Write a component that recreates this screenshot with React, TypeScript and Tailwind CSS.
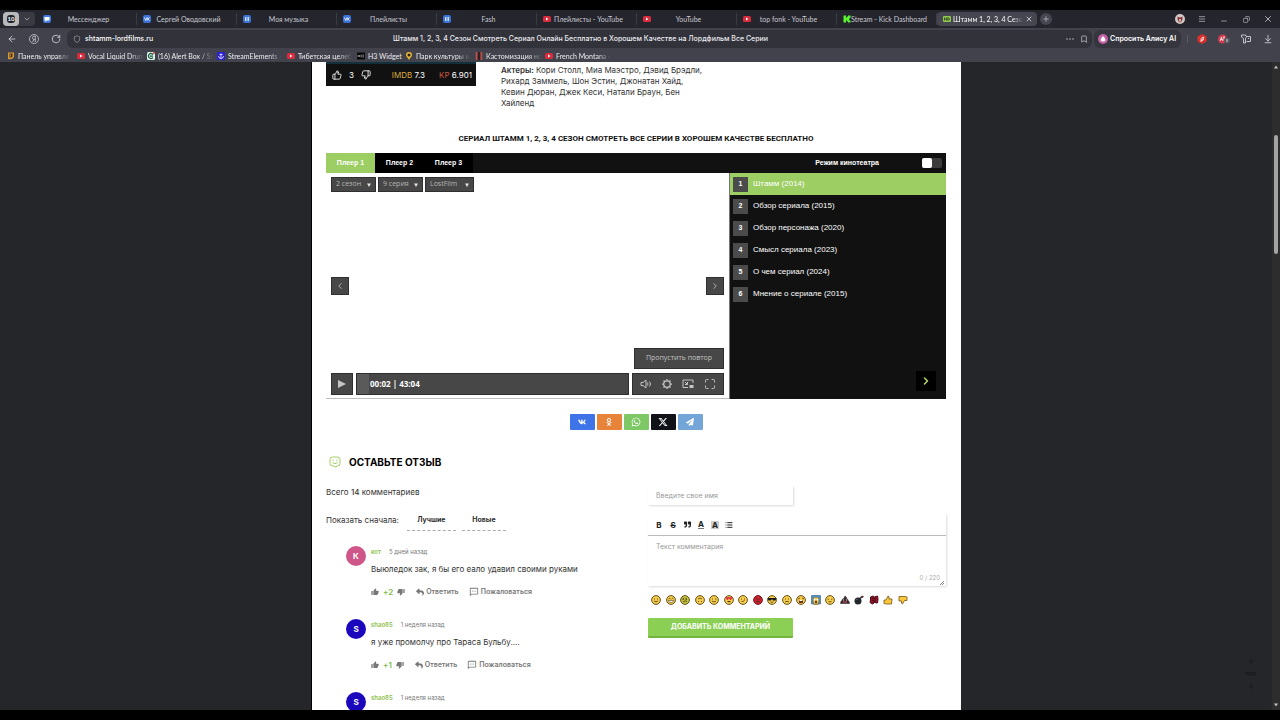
import { useState } from 'react'
import type { ReactNode } from 'react'
import clsx from 'clsx'
import {
  ArrowDown,
  ArrowDownToLine,
  ArrowLeft,
  ArrowUp,
  Bookmark,
  ChevronDown,
  ChevronLeft,
  ChevronRight,
  Copy,
  List,
  Maximize,
  Menu,
  Minus,
  Plus,
  RotateCw,
  Shield,
  ThumbsDown,
  ThumbsUp,
  X,
} from 'lucide-react'
import { FaOdnoklassniki, FaPaperPlane, FaQuoteRight, FaReply, FaVk, FaWhatsapp } from 'react-icons/fa'
import { FaXTwitter } from 'react-icons/fa6'
import { MdOutlineSms, MdThumbDown, MdThumbUp } from 'react-icons/md'

type IconKind = 'chat' | 'vk' | 'pause' | 'youtube' | 'kick' | 'hd' | 'panel' | 'alert' | 'anchor' | 'h3' | 'pin' | 'bars'

const TABS: { icon: IconKind; title: string }[] = [
  { icon: 'chat', title: 'Мессенджер' },
  { icon: 'vk', title: 'Сергей Оводовский' },
  { icon: 'pause', title: 'Моя музыка' },
  { icon: 'vk', title: 'Плейлисты' },
  { icon: 'pause', title: 'Fash' },
  { icon: 'youtube', title: 'Плейлисты - YouTube' },
  { icon: 'youtube', title: 'YouTube' },
  { icon: 'youtube', title: 'top fonk - YouTube' },
  { icon: 'kick', title: 'Stream - Kick Dashboard' },
]

const BOOKMARKS: { icon: IconKind; title: string; short?: boolean }[] = [
  { icon: 'panel', title: 'Панель управле' },
  { icon: 'youtube', title: 'Vocal Liquid Drum' },
  { icon: 'alert', title: '(16) Alert Box / St' },
  { icon: 'anchor', title: 'StreamElements -' },
  { icon: 'youtube', title: 'Тибетская целеб' },
  { icon: 'h3', title: 'H3 Widget', short: true },
  { icon: 'pin', title: 'Парк культуры и' },
  { icon: 'bars', title: 'Кастомизация но' },
  { icon: 'youtube', title: 'French Montana -' },
]

const PLAYLIST = [
  'Штамм (2014)',
  'Обзор сериала (2015)',
  'Обзор персонажа (2020)',
  'Смысл сериала (2023)',
  'О чем сериал (2024)',
  'Мнение о сериале (2015)',
]

const SHARE = [
  { label: 'VK', color: 'bg-[#3f74e8]', icon: <FaVk className="size-2" /> },
  { label: 'Одноклассники', color: 'bg-[#e8833a]', icon: <FaOdnoklassniki className="size-2" /> },
  { label: 'WhatsApp', color: 'bg-[#7dc764]', icon: <FaWhatsapp className="size-2.5" /> },
  { label: 'X', color: 'bg-[#101218]', icon: <FaXTwitter className="size-2.5" /> },
  { label: 'Telegram', color: 'bg-[#74a5d8]', icon: <FaPaperPlane className="size-2" /> },
]

const COMMENTS = [
  { name: 'кот', letter: 'К', color: 'bg-[#cf5688]', date: '5 дней назад', text: 'Выюледок зак, я бы его еало удавил своими руками', votes: '+2' },
  { name: 'shao85', letter: 'S', color: 'bg-[#1b08bd]', date: '1 неделя назад', text: 'я уже промолчу про Тараса Бульбу....', votes: '+1' },
  { name: 'shao85', letter: 'S', color: 'bg-[#1b08bd]', date: '1 неделя назад', text: '', votes: '' },
]

const EMOJIS = [
  'smile', 'grin', 'sick', 'upside', 'wink', 'love', 'smirk', 'angry', 'cool',
  'sad', 'weary', 'scream', 'relieved', 'poop', 'bomb', 'hundred', 'like', 'dislike',
]

function SiteIcon({ kind }: { kind: IconKind }) {
  return (
    <svg viewBox="0 0 16 16" className="size-2 shrink-0">
      {kind === 'chat' && (
        <>
          <rect width="16" height="16" rx="4" fill="#3f78dd" />
          <path d="M3 4h10v7H8l-3 3v-3H3z" fill="#fff" />
        </>
      )}
      {kind === 'vk' && (
        <>
          <rect width="16" height="16" rx="4" fill="#3a72d8" />
          <path d="M3 5l2.5 6L8 5M9.500 5v6M13 5L10 8l3 3" stroke="#fff" strokeWidth="1.600" fill="none" />
        </>
      )}
      {kind === 'pause' && (
        <>
          <rect width="16" height="16" rx="4" fill="#3a72d8" />
          <path d="M5 4v8M8 4v8M11 4v8" stroke="#fff" strokeWidth="1.500" />
        </>
      )}
      {kind === 'youtube' && (
        <>
          <rect y="2" width="16" height="12" rx="3" fill="#d92b3c" />
          <path d="M6 5l5 3-5 3z" fill="#fff" />
        </>
      )}
      {kind === 'kick' && (
        <path d="M1 1h5v4h2V3h2V1h5v5h-2v2h-1v1h1v2h2v4h-5v-2H8v-2H6v4H1z" fill="#5cf52c" />
      )}
      {kind === 'hd' && (
        <>
          <rect y="2" width="16" height="12" rx="2" fill="#8fc950" />
          <path d="M3 5v6M7 5v6M3 8h4M9.500 5.500v5h1.500q2-.5 2-2.500t-2-2.500z" stroke="#22351a" strokeWidth="1.500" fill="none" />
        </>
      )}
      {kind === 'panel' && (
        <>
          <path d="M2 1h12v9l-4 4H7l-2 2v-2H2z" fill="#d79a35" />
          <path d="M5 3h6v6l-2 2H5z" fill="#43311a" />
          <path d="M7 5v4" stroke="#d79a35" strokeWidth="1.500" />
        </>
      )}
      {kind === 'alert' && (
        <>
          <rect width="16" height="16" rx="3" fill="#d9f5e8" />
          <path d="M12 5a5 5 0 1 0 0 6M6 8h6" stroke="#18523d" strokeWidth="2.500" fill="none" />
          <circle cx="14" cy="2" r="2" fill="#e23b3b" />
        </>
      )}
      {kind === 'anchor' && (
        <>
          <rect width="16" height="16" rx="2" fill="#2a1fd6" />
          <path d="M8 3v10M3 8q0 5 5 5t5-5M5 5h6" stroke="#fff" strokeWidth="1.500" fill="none" />
        </>
      )}
      {kind === 'h3' && (
        <>
          <rect y="1" width="16" height="14" fill="#08080a" />
          <path d="M2 6v4M5 6v4M2 8h3M7 6h2l-1 2 1 2H7M11 6h3M11 8h3M11 10h3" stroke="#ddd" strokeWidth="1" fill="none" />
        </>
      )}
      {kind === 'pin' && (
        <>
          <path d="M8 0a6 6 0 0 0-6 6c0 4 4 5 6 10 2-5 6-6 6-10a6 6 0 0 0-6-6z" fill="#ecb92d" />
          <circle cx="8" cy="6" r="3" fill="#25242a" />
        </>
      )}
      {kind === 'bars' && (
        <>
          <path d="M3 0v16M13 0v16" stroke="#cf4b42" strokeWidth="3" />
          <path d="M8 0v16" stroke="#2a2225" strokeWidth="4" />
        </>
      )}
    </svg>
  )
}

function FaceDetails({ kind }: { kind: string }) {
  const line = { stroke: '#3d2c10', strokeWidth: 1.5, fill: 'none' }
  switch (kind) {
    case 'grin':
      return (
        <>
          <path d="M5 8l2-1.500L9 8M11 8l2-1.500L15 8" {...line} />
          <path d="M4.500 11h11q-1 4-5.500 4t-5.500-4z" fill="#fff" stroke="#3d2c10" />
        </>
      )
    case 'sick':
      return <path d="M5 6l3 2-3 1M14 6l-3 2 3 1M6 14q5-4 8-1" {...line} />
    case 'upside':
      return <path d="M6 8q4-4 8 0M7 12v2M13 12v2" {...line} />
    case 'wink':
      return <path d="M7 7v2M12 8h3M6 12q4 4 8 0" {...line} />
    case 'love':
      return (
        <>
          <path d="M3 5l4 5 3-5-3 0zM10 5l3 5 4-5-3 0z" fill="#de2f43" stroke="#de2f43" strokeWidth="1.500" />
          <path d="M6 12q4 5 8 0z" fill="#4a2412" />
        </>
      )
    case 'smirk':
      return <path d="M6 8h2M12 8h2M7 13q4 0 6-2" {...line} />
    case 'angry':
      return <path d="M5 6l4 3M15 6l-4 3M6 14q4-3 8 0" {...line} />
    case 'cool':
      return (
        <>
          <path d="M1 6h18l-2 5h-5l-2-3-2 3H3z" fill="#16161c" />
          <path d="M7 14q3 2 6-1" {...line} />
        </>
      )
    case 'sad':
      return <path d="M7 7v2M13 7v2M6 14q4-3 8 0" {...line} />
    case 'weary':
      return (
        <>
          <path d="M4 8l4-2M16 8l-4-2" {...line} />
          <path d="M6 10h8v6H6z" fill="#6b3315" />
          <path d="M7 11h6" stroke="#fff" strokeWidth="2" />
        </>
      )
    case 'relieved':
      return <path d="M5 8q1.500 1.500 3 0M12 8q1.500 1.500 3 0M7 13q3 2 6 0" {...line} />
    default:
      return <path d="M7 7v2M13 7v2M6 12q4 3 8 0" {...line} />
  }
}

function Emoji({ kind }: { kind: string }) {
  return (
    <svg viewBox="0 0 20 20" className="size-2.5">
      {kind === 'poop' && (
        <>
          <path d="M10 2q4 2 3 5 3 1 3 4 3 1 3 6H1q0-5 3-6 0-3 3-4 2-2 3-5z" fill="#3c2b30" stroke="#1d1418" />
          <path d="M6 10h2M12 10h2" stroke="#eee" strokeWidth="2" />
          <path d="M6 14h8" stroke="#d94c56" strokeWidth="2" />
        </>
      )}
      {kind === 'bomb' && (
        <>
          <circle cx="8" cy="12" r="7" fill="#24262d" />
          <path d="M12 7l4-4 2 2" stroke="#24262d" strokeWidth="3" fill="none" />
          <path d="M5 10l2-2" stroke="#7b7f8c" strokeWidth="2" />
          <circle cx="18" cy="3" r="1.500" fill="#a33a30" />
        </>
      )}
      {kind === 'hundred' && (
        <>
          <path d="M3 4l5-2 3 2 6-2 1 6-1 8-6-1-4 3-5-3 1-5z" fill="#8d1426" stroke="#4b0b17" strokeWidth="2" />
          <path d="M6 7l8-1M6 11l8-1M8 15l5-1" stroke="#3b0812" strokeWidth="1.500" />
        </>
      )}
      {kind === 'like' && (
        <path d="M2 10h4l4-8q3 0 2 6h6l-1 10H7l-5-1z" fill="#fbc83b" stroke="#6d4b0b" strokeWidth="1.500" />
      )}
      {kind === 'dislike' && (
        <path d="M2 3h13l3 1v7h-5l-4 7q-3 0-2-6H2z" fill="#fbc83b" stroke="#6d4b0b" strokeWidth="1.500" />
      )}
      {kind === 'scream' && (
        <>
          <path d="M1 1h18v17H1z" fill="#4f8fd0" stroke="#24466b" />
          <path d="M10 4q7 0 6 8l-2 7H6l-2-7q-1-8 6-8z" fill="#f6c944" stroke="#5d4411" />
          <circle cx="7" cy="9" r="1.800" fill="#fff" />
          <circle cx="13" cy="9" r="1.800" fill="#fff" />
          <ellipse cx="10" cy="14" rx="2" ry="3" fill="#4a2c12" />
        </>
      )}
      {!['poop', 'bomb', 'hundred', 'like', 'dislike', 'scream'].includes(kind) && (
        <>
          <circle
            cx="10"
            cy="10"
            r="8.800"
            fill={kind === 'angry' ? '#c9232f' : kind === 'sick' ? '#c1c23f' : '#f7cd4c'}
            stroke={kind === 'angry' ? '#7d141c' : '#66501c'}
            strokeWidth="2"
          />
          <FaceDetails kind={kind} />
        </>
      )}
    </svg>
  )
}

function IconButton({ label, children, className }: { label: string; children: ReactNode; className?: string }) {
  return (
    <button type="button" aria-label={label} className={clsx('flex w-[22px] shrink-0 items-center justify-center', className)}>
      {children}
    </button>
  )
}

function TabStrip() {
  return (
    <div className="flex h-[18px] items-center bg-[#25252e] pr-px font-['Lato',sans-serif] text-[7px] text-[#c9c9d0]">
      <div className="ml-[3px] flex h-3.5 w-8 items-center rounded bg-[#3a3a43]">
        <button type="button" className="flex h-full w-4 items-center justify-center rounded bg-[#b9b9ba]">
          <span className="rounded-[3px] bg-[#22222a] px-px text-[6px] leading-2 font-bold text-white">10</span>
        </button>
        <button type="button" aria-label="Группы вкладок" className="flex flex-1 justify-center">
          <ChevronDown className="size-2" />
        </button>
      </div>
      <div className="ml-0.5 flex min-w-0 items-center">
        {TABS.map((tab, i) => (
          <a key={i} href="#" className="flex h-3 w-[100px] min-w-0 items-center border-r border-[#3b3b45] pr-2.5 pl-1.5">
            <SiteIcon kind={tab.icon} />
            <span className="min-w-0 flex-1 text-center whitespace-nowrap">{tab.title}</span>
          </a>
        ))}
        <div className="flex h-3.5 w-[100px] items-center gap-0.5 rounded bg-[#464650] pr-1 pl-1.5 text-white">
          <SiteIcon kind="hd" />
          <span className="min-w-0 flex-1 whitespace-nowrap [mask-image:linear-gradient(to_right,black_85%,transparent)]">
            Штамм 1, 2, 3, 4 Сезон
          </span>
          <button type="button" aria-label="Закрыть вкладку">
            <X className="size-2" />
          </button>
        </div>
        <button type="button" aria-label="Новая вкладка" className="ml-[3px] flex size-3 items-center justify-center rounded-full bg-[#464650]">
          <Plus className="size-2" />
        </button>
      </div>
      <div className="ml-auto flex items-center">
        <IconButton label="Профиль">
          <span className="flex size-2.5 items-center justify-center rounded-full bg-[#d5c8c4]">
            <svg viewBox="0 0 10 10" className="size-2">
              <path d="M2 2l2 1h2l2-1v4L6 9H4L2 6z" fill="#7d3030" />
              <path d="M4 5h2v3H4z" fill="#e8dcd8" />
            </svg>
          </span>
        </IconButton>
        <IconButton label="Меню"><Menu className="size-2" /></IconButton>
        <IconButton label="Свернуть"><Minus className="mt-1 size-2" /></IconButton>
        <IconButton label="Развернуть"><Copy className="size-[7px] -scale-x-100" /></IconButton>
        <IconButton label="Закрыть"><X className="size-2.5" /></IconButton>
      </div>
    </div>
  )
}

function AddressBar() {
  return (
    <div className="flex h-[22px] items-center bg-[#42424c] pr-px pl-px font-['Inter',sans-serif] text-[7px] text-[#d2d2d8]">
      <IconButton label="Назад"><ArrowLeft className="size-2.5" /></IconButton>
      <IconButton label="Яндекс">
        <svg viewBox="0 0 20 20" className="size-2.5" fill="none" stroke="currentColor" strokeWidth="1.500">
          <circle cx="10" cy="10" r="9" />
          <path d="M12.500 16V4h-2Q7 4 7 7.500t3.500 3.500h2M10 11l-3 5" />
        </svg>
      </IconButton>
      <IconButton label="Обновить"><RotateCw className="size-2.5" /></IconButton>
      <div className="grid h-[18px] min-w-0 flex-1 grid-cols-[1fr_auto_1fr] items-center rounded-md bg-[#32323b] pr-1 pl-1.5 font-medium">
        <div className="flex items-center gap-1 text-white">
          <Shield className="size-2 text-[#a9a9b2]" />
          shtamm-lordfilms.ru
        </div>
        <div className="truncate text-[#ececf0]">
          Штамм 1, 2, 3, 4 Сезон Смотреть Сериал Онлайн Бесплатно в Хорошем Качестве на Лордфильм Все Серии
        </div>
        <div className="flex items-center justify-end gap-1.5">
          <button type="button" aria-label="Ещё">
            <svg viewBox="0 0 8 8" className="size-2" fill="currentColor">
              <circle cx="1" cy="4" r=".7" />
              <circle cx="4" cy="4" r=".7" />
              <circle cx="7" cy="4" r=".7" />
            </svg>
          </button>
          <button type="button" aria-label="В закладки"><Bookmark className="size-2" /></button>
        </div>
      </div>
      <button type="button" className="ml-0.5 flex h-[18px] w-[87px] items-center gap-0.5 rounded-md bg-[#35353e] pl-1 font-semibold text-white">
        <svg viewBox="0 0 20 20" className="size-2.5">
          <circle cx="10" cy="10" r="10" fill="#c65fa6" />
          <path d="M10 4q5 5 5 8t-5 3-5-3 5-8z" fill="#fff" />
        </svg>
        Спросить Алису AI
      </button>
      <span className="mr-[3px] ml-1.5 h-2 w-px bg-[#5b5b65]" />
      <IconButton label="Защита">
        <svg viewBox="0 0 20 20" className="size-2.5">
          <path d="M10 0l9 5v10l-9 5-9-5V5z" fill="#d9302c" />
          <path d="M8 14q-2-6 5-8 1 8-4 8M7 16l5-7" stroke="#fff" strokeWidth="1.500" fill="none" />
        </svg>
      </IconButton>
      <IconButton label="Переводчик">
        <svg viewBox="0 0 24 20" className="h-2.5 w-3">
          <circle cx="9" cy="10" r="9" fill="#d13b4d" />
          <path d="M4 14l3-8 2 8M5 11h4M10 6h4M12 6v7" stroke="#fff" strokeWidth="1.500" fill="none" />
          <circle cx="18" cy="13" r="6" fill="#55555f" />
          <path d="M18 10v6" stroke="#fff" strokeWidth="1.500" />
        </svg>
      </IconButton>
      <IconButton label="Расширения">
        <svg viewBox="0 0 24 20" className="h-2.5 w-3" fill="none" stroke="currentColor" strokeWidth="1.800">
          <path d="M3 2h8l2 3h8v10h-8M3 2v4l4 3v9h4v-9l2-4M16 9h2" />
        </svg>
      </IconButton>
      <IconButton label="Загрузки"><ArrowDownToLine className="size-2.5" /></IconButton>
    </div>
  )
}

function BookmarksBar() {
  return (
    <nav className="flex h-3 items-center gap-0.5 bg-[#42424c] pl-[7px] font-['Lato',sans-serif] text-[7px] text-[#ececf0]">
      {BOOKMARKS.map((b, i) => (
        <a key={i} href="#" className={clsx('flex items-center gap-[3px]', b.short ? 'w-[46px]' : 'w-[68px]')}>
          <SiteIcon kind={b.icon} />
          <span
            className={clsx(
              'min-w-0 whitespace-nowrap',
              !b.short && '[mask-image:linear-gradient(to_right,black_75%,transparent)]',
            )}
          >
            {b.title}
          </span>
        </a>
      ))}
    </nav>
  )
}

function PlayerSelect({ label, options, className }: { label: string; options: string[]; className: string }) {
  return (
    <span className={clsx('relative flex items-center', className)}>
      <select
        aria-label={label}
        className="h-[15px] w-full appearance-none border border-[#2f2f2f] bg-[#474747] pl-1 text-[7px] text-[#b5b5b5]"
      >
        {options.map((o) => (
          <option key={o}>{o}</option>
        ))}
      </select>
      <svg viewBox="0 0 8 8" className="pointer-events-none absolute right-[5px] size-1 text-[#e4e4e4]">
        <path d="M0 1h8L4 8z" fill="currentColor" />
      </svg>
    </span>
  )
}

function Player() {
  const [tab, setTab] = useState(0)
  const [active, setActive] = useState(0)
  const box = 'flex items-center justify-center border border-[#2f2f2f] bg-[#474747] text-[#c4c4c4]'

  return (
    <section className="mt-2 font-['Liberation_Sans',sans-serif] text-[7px] text-white">
      <div className="flex h-5 items-center bg-[#111]">
        {['Плеер 1', 'Плеер 2', 'Плеер 3'].map((name, i) => (
          <button
            key={name}
            type="button"
            onClick={() => setTab(i)}
            className={clsx('h-full w-[49px] font-bold', i === tab ? 'bg-[#9dce64]' : 'bg-black')}
          >
            {name}
          </button>
        ))}
        <label className="mr-1 ml-auto flex items-center gap-[43px] font-bold">
          Режим кинотеатра
          <input type="checkbox" className="peer sr-only" />
          <span className="flex h-2.5 w-5 rounded-xs bg-[#3b3b3b] peer-checked:justify-end">
            <span className="size-2.5 rounded-xs bg-white" />
          </span>
        </label>
      </div>

      <div className="flex h-[226px]">
        <div className="flex min-w-0 flex-1 flex-col border-b border-[#bdbdbd] bg-white px-[5px] pt-1 pb-[3px] font-['Open_Sans',sans-serif]">
          <div className="flex gap-0.5">
            <PlayerSelect label="Сезон" options={['2 сезон', '1 сезон', '3 сезон']} className="w-[45px]" />
            <PlayerSelect label="Серия" options={['9 серия', '10 серия']} className="w-[45px]" />
            <PlayerSelect label="Озвучка" options={['LostFilm']} className="w-[49px]" />
          </div>
          <div className="flex flex-1 items-center justify-between pt-8">
            <button type="button" aria-label="Предыдущая серия" className={clsx(box, 'size-[18px]')}>
              <ChevronLeft className="size-2.5" />
            </button>
            <button type="button" aria-label="Следующая серия" className={clsx(box, 'size-[18px]')}>
              <ChevronRight className="size-2.5" />
            </button>
          </div>
          <button type="button" className={clsx(box, 'h-[21px] w-[90px] self-end text-[#a9a9a9]')}>
            Пропустить повтор
          </button>
          <div className="mt-1 flex h-[22px] gap-[3px]">
            <button type="button" aria-label="Воспроизвести" className={clsx(box, 'w-[22px]')}>
              <svg viewBox="0 0 8 8" className="size-2"><path d="M0 0l8 4-8 4z" fill="currentColor" /></svg>
            </button>
            <div className="flex min-w-0 flex-1 items-center border border-[#2f2f2f] bg-[#474747] text-[8px] font-bold">
              <span className="mr-px h-full w-3 bg-[#5a5a5a]" />
              00:02 | 43:04
            </div>
            <div className={clsx(box, 'w-[92px] gap-2.5')}>
              <button type="button" aria-label="Звук">
                <svg viewBox="0 0 24 20" className="h-2.5 w-3" fill="none" stroke="currentColor" strokeWidth="2">
                  <path d="M2 7h4l6-5v16l-6-5H2zM15 7q2 3 0 6M19 5q4 5 0 10" />
                </svg>
              </button>
              <button type="button" aria-label="Настройки">
                <svg viewBox="0 0 20 20" className="size-2.5" fill="none" stroke="currentColor" strokeWidth="2.500">
                  <circle cx="10" cy="10" r="6.500" />
                  <path d="M10 0v3M10 17v3M0 10h3M17 10h3M3 3l2 2M15 15l2 2M17 3l-2 2M3 17l2-2" />
                </svg>
              </button>
              <button type="button" aria-label="Картинка в картинке">
                <svg viewBox="0 0 24 20" className="h-2.5 w-3" fill="none" stroke="currentColor" strokeWidth="2">
                  <path d="M22 8V2H2v15h10M6 6l5 5M11 6v5H6" />
                  <path d="M15 12h8v6h-8z" fill="currentColor" stroke="none" />
                </svg>
              </button>
              <button type="button" aria-label="Во весь экран">
                <Maximize className="size-3" />
              </button>
            </div>
          </div>
        </div>

        <div className="flex w-[217px] flex-col border-l border-[#777] bg-[#111]">
          {PLAYLIST.map((title, i) => (
            <button
              key={title}
              type="button"
              onClick={() => setActive(i)}
              className={clsx('flex h-[22px] items-center gap-[5px] pl-[3px] text-left text-[8px]', i === active && 'bg-[#9dce64]')}
            >
              <span className="flex size-[15px] items-center justify-center bg-[#4b4b4b] text-[7px] font-bold">{i + 1}</span>
              {title}
            </button>
          ))}
          <button type="button" aria-label="Дальше" className="mt-auto mr-2.5 mb-2 flex size-5 items-center justify-center self-end bg-black text-[#b4d86f]">
            <ChevronRight className="size-3" strokeWidth={3} />
          </button>
        </div>
      </div>
    </section>
  )
}

function CommentItem({ comment }: { comment: (typeof COMMENTS)[number] }) {
  return (
    <li className="flex gap-[5px]">
      <span className={clsx('flex size-5 shrink-0 items-center justify-center rounded-full text-[8px] font-bold text-white', comment.color)}>
        {comment.letter}
      </span>
      <div className="pt-px">
        <div className="flex gap-2 text-[6px] leading-[10px] text-[#777]">
          <a href="#" className="font-semibold text-[#8cc04b]">{comment.name}</a>
          <span>{comment.date}</span>
        </div>
        <p className="mt-1.5 leading-3">{comment.text}</p>
        <div className="mt-[11px] flex h-3 items-center text-[7px] font-semibold text-[#777]">
          <button type="button" aria-label="Нравится"><MdThumbUp className="size-2" /></button>
          <span className="mx-1 text-[8px] text-[#7dbb42]">{comment.votes}</span>
          <button type="button" aria-label="Не нравится"><MdThumbDown className="size-2" /></button>
          <button type="button" className="ml-[11px] flex items-center gap-0.5">
            <FaReply className="size-2" />
            Ответить
          </button>
          <button type="button" className="ml-2.5 flex items-center gap-0.5">
            <MdOutlineSms className="size-2.5" />
            Пожаловаться
          </button>
        </div>
      </div>
    </li>
  )
}

function CommentForm() {
  const [text, setText] = useState('')
  const tool = 'flex w-3.5 items-center justify-center font-bold leading-none'

  return (
    <form className="w-[298px] text-[7px]" onSubmit={(e) => e.preventDefault()}>
      <input
        aria-label="Имя"
        placeholder="Введите свое имя"
        className="block h-[19px] w-[145px] px-2 shadow-[1px_1px_2px_rgba(0,0,0,0.15)] placeholder:text-[#999]"
      />
      <div className="mt-[9px] shadow-[1px_1px_2px_rgba(0,0,0,0.15)]">
        <div className="flex h-[22px] items-center border-b border-[#bbb] pl-1 text-[8px] text-[#222]">
          <button type="button" className={tool}>B</button>
          <button type="button" className={clsx(tool, 'line-through')}>S</button>
          <button type="button" aria-label="Цитата" className={tool}><FaQuoteRight className="size-[7px]" /></button>
          <button type="button" className={tool}><span className="border-b border-[#777]">A</span></button>
          <button type="button" className={tool}><span className="bg-[#ccc] px-px">A</span></button>
          <button type="button" aria-label="Список" className={tool}><List className="size-2" strokeWidth={3} /></button>
        </div>
        <div className="relative">
          <textarea
            aria-label="Комментарий"
            placeholder="Текст комментария"
            maxLength={220}
            value={text}
            onChange={(e) => setText(e.target.value)}
            className="block h-[50px] w-full resize-none px-2 py-1.5 placeholder:text-[#999]"
          />
          <span className="absolute right-1.5 bottom-1 text-[6px] text-[#aaa]">{text.length} / 220</span>
          <svg viewBox="0 0 8 8" className="absolute right-0.5 bottom-px size-1">
            <path d="M0 8l8-8M4 8l4-4" stroke="#666" strokeWidth="1.500" />
          </svg>
        </div>
      </div>
      <div className="mt-2 ml-px grid h-3 w-[261px] grid-cols-18 place-items-center">
        {EMOJIS.map((kind) => (
          <button key={kind} type="button" aria-label={kind}><Emoji kind={kind} /></button>
        ))}
      </div>
      <button type="submit" className="mt-3 h-5 w-[145px] rounded-[1px] border-b-2 border-[#72b43c] bg-[#8ccf55] font-bold text-white">
        ДОБАВИТЬ КОММЕНТАРИЙ
      </button>
    </form>
  )
}

export default function App() {
  const sortButton = 'h-full border-b border-dashed border-[#aaa] pt-0.5 text-[7px] font-bold'

  return (
    <div className="flex h-screen flex-col overflow-hidden bg-black py-2.5">
      <header>
        <TabStrip />
        <AddressBar />
        <BookmarksBar />
      </header>

      <div className="relative flex min-h-0 flex-1 bg-[#252629]">
        <main className="min-w-0 flex-1 overflow-hidden">
          <div className="mx-auto h-full w-full max-w-[650px] overflow-hidden border-l border-black bg-white pr-[15px] pl-3.5 font-['Inter',sans-serif] text-[8px] text-[#333]">
            <div className="flex items-start gap-[25px]">
              <div className="flex h-6 w-[150px] items-center border-t-2 border-[#12303a] bg-[#111] pr-1 pl-1.5 text-white">
                <button type="button" aria-label="Нравится"><ThumbsUp className="size-2.5" /></button>
                <span className="mx-[7px]">3</span>
                <button type="button" aria-label="Не нравится"><ThumbsDown className="size-2.5" /></button>
                <span className="ml-auto"><span className="text-[#d9ab3a]">IMDB</span> 7.3</span>
                <span className="ml-3.5"><span className="text-[#c9583f]">KP</span> 6.901</span>
              </div>
              <p className="w-[205px] pt-[3px] leading-[11px]">
                <b className="font-semibold">Актеры:</b> Кори Столл, Миа Маэстро, Дэвид Брэдли, Рихард Заммель, Шон Эстин, Джонатан Хайд, Кевин Дюран, Джек Кеси, Натали Браун, Бен Хайленд
              </p>
            </div>

            <h1 className="mt-6 text-center font-['Roboto',sans-serif] text-[8px] leading-3 font-bold text-[#111]">
              СЕРИАЛ ШТАММ 1, 2, 3, 4 СЕЗОН СМОТРЕТЬ ВСЕ СЕРИИ В ХОРОШЕМ КАЧЕСТВЕ БЕСПЛАТНО
            </h1>

            <Player />

            <div className="mt-[15px] flex justify-center gap-0.5">
              {SHARE.map((s) => (
                <a key={s.label} href="#" aria-label={s.label} className={clsx('flex h-4 w-[25px] items-center justify-center rounded-[1px] text-white', s.color)}>
                  {s.icon}
                </a>
              ))}
            </div>

            <h2 className="mt-[25px] flex items-center gap-2 pl-[3px] text-[10px] leading-[14px] font-bold text-black">
              <svg viewBox="0 0 24 24" className="size-3" fill="none" stroke="#a3cc61" strokeWidth="2">
                <path d="M7 2h10q5 0 5 5v8q0 5-5 5l-5 2-2-2H7q-5 0-5-5V7q0-5 5-5zM8 7v3M16 7v3M7 13q5 5 10 0" />
              </svg>
              ОСТАВЬТЕ ОТЗЫВ
            </h2>

            <div className="mt-[17px] flex">
              <div className="min-w-0 flex-1">
                <p className="leading-3">Всего <b className="font-medium">14</b> комментариев</p>
                <div className="mt-[11px] flex h-[22px] items-center">
                  Показать сначала:
                  <button type="button" className={clsx(sortButton, 'ml-2 w-[49px]')}>Лучшие</button>
                  <button type="button" className={clsx(sortButton, 'ml-1.5 w-11')}>Новые</button>
                </div>
                <ul className="mt-[15px] flex flex-col gap-[21px] pl-5">
                  {COMMENTS.map((c, i) => (
                    <CommentItem key={i} comment={c} />
                  ))}
                </ul>
              </div>
              <CommentForm />
            </div>
          </div>
        </main>

        <div className="absolute right-6 bottom-5 flex flex-col items-center text-[5px] leading-4 font-bold text-[#17181a]">
          <ArrowUp className="size-2" />
          ТОП
          <ArrowDown className="size-2" />
        </div>

        {/* scrollbar */}
        <div className="flex w-2 flex-col items-center bg-[#2d2d2d] py-[3px]">
          <svg viewBox="0 0 8 8" className="size-1 text-[#c4c4c4]"><path d="M4 1l4 6H0z" fill="currentColor" /></svg>
          <div className="mt-[66px] h-[119px] w-1 rounded-full bg-[#a3a3a3]" />
          <svg viewBox="0 0 8 8" className="mt-auto size-1 text-[#c4c4c4]"><path d="M0 1h8L4 7z" fill="currentColor" /></svg>
        </div>
      </div>
    </div>
  )
}
